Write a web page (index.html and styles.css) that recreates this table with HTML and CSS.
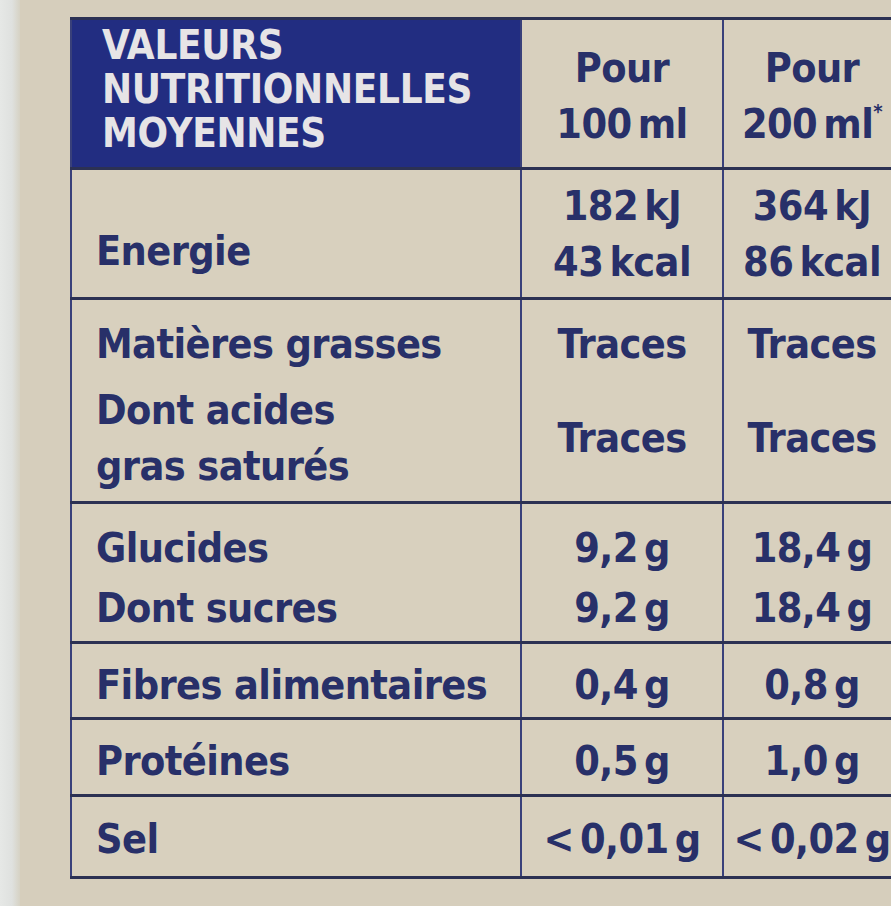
FILE: index.html
```html
<!DOCTYPE html>
<html lang="fr">
<head>
<meta charset="utf-8">
<title>Valeurs nutritionnelles</title>
<link rel="stylesheet" href="styles.css">
</head>
<body>
<div class="package">
  <div class="edge"></div>
  <div class="panel">
    <table class="nutri">
      <colgroup>
        <col class="c-label">
        <col class="c-100">
        <col class="c-200">
      </colgroup>
      <thead>
        <tr class="r-head">
          <th class="title">VALEURS<br>NUTRITIONNELLES<br>MOYENNES</th>
          <th class="val">Pour<br>100 ml</th>
          <th class="val">Pour<br>200 ml<sup>*</sup></th>
        </tr>
      </thead>
      <tbody>
        <tr class="r-energy">
          <td class="label">Energie</td>
          <td class="val">182 kJ<br>43 kcal</td>
          <td class="val">364 kJ<br>86 kcal</td>
        </tr>
        <tr class="r-fat">
          <td class="label"><div class="l1">Matières grasses</div><div class="l2">Dont acides<br>gras saturés</div></td>
          <td class="val"><div class="l1">Traces</div><div class="l2 mid">Traces</div></td>
          <td class="val"><div class="l1">Traces</div><div class="l2 mid">Traces</div></td>
        </tr>
        <tr class="r-carb">
          <td class="label">Glucides<br>Dont sucres</td>
          <td class="val">9,2 g<br>9,2 g</td>
          <td class="val">18,4 g<br>18,4 g</td>
        </tr>
        <tr class="r-fibre">
          <td class="label">Fibres alimentaires</td>
          <td class="val">0,4 g</td>
          <td class="val">0,8 g</td>
        </tr>
        <tr class="r-prot">
          <td class="label">Protéines</td>
          <td class="val">0,5 g</td>
          <td class="val">1,0 g</td>
        </tr>
        <tr class="r-salt">
          <td class="label">Sel</td>
          <td class="val">&lt; 0,01 g</td>
          <td class="val">&lt; 0,02 g</td>
        </tr>
      </tbody>
    </table>
  </div>
</div>
</body>
</html>
```
FILE: styles.css
```css
html, body {
  margin: 0;
  padding: 0;
  width: 891px;
  height: 906px;
  overflow: hidden;
  background: #d6cebc;
}
.package {
  display: flex;
  width: 891px;
  height: 906px;
  background: #d6cebc;
}
.edge {
  flex: 0 0 20px;
  background: linear-gradient(90deg, #e6e8e6 0%, #dfe1df 60%, #d6d2c4 100%);
}
.panel {
  flex: 1;
  padding: 17px 0 0 50px;
  overflow: hidden;
}
.nutri {
  table-layout: fixed;
  border-collapse: collapse;
  width: 830px;
  font-family: "DejaVu Sans Condensed", "DejaVu Sans", sans-serif;
  font-weight: bold;
  color: #283069;
  font-size: 41px;
  letter-spacing: -0.6px;
  line-height: 56px;
  background: #d8d0be;
}
.c-label { width: 450px; }
.c-100 { width: 202px; }
.c-200 { width: 178px; }
.nutri th, .nutri td {
  border-top: 3px solid #2c3153;
  border-bottom: 3px solid #2c3153;
  border-left: 2px solid #39407a;
  border-right: 2px solid #39407a;
  padding: 0;
  vertical-align: middle;
  font-weight: bold;
}
.title {
  background: #222d81;
  color: #e6e4e6;
  text-align: left;
  text-transform: uppercase;
  font-size: 40px;
  letter-spacing: -0.3px;
  line-height: 44px;
  padding-left: 30px !important;
  vertical-align: top !important;
  padding-top: 3px !important;
}
.val { text-align: center; word-spacing: -6px; }
.label { text-align: left; padding-left: 24px !important; }
.r-head { height: 150px; }
.r-head .val { line-height: 56px; padding-top: 4px !important; }
.r-head sup { font-size: 20px; line-height: 0; vertical-align: 20px; }
.r-energy { height: 130px; }
.r-energy .label { padding-top: 34px !important; }
.r-fat { height: 204px; }
.r-fat .l1 { height: 76px; line-height: 76px; }
.r-fat .l2 { height: 112px; line-height: 56px; }
.r-fat .l2.mid { line-height: 112px; }
.r-fat td { vertical-align: top; padding-top: 6px !important; }
.r-carb { height: 140px; }
.r-carb td { line-height: 60px; padding-top: 10px !important; }
.r-fibre { height: 76px; }
.r-fibre td { padding-top: 8px !important; }
.r-prot { height: 77px; }
.r-prot td { padding-top: 8px !important; }
.r-salt { height: 82px; }
.r-salt td { padding-top: 4px !important; }
```
